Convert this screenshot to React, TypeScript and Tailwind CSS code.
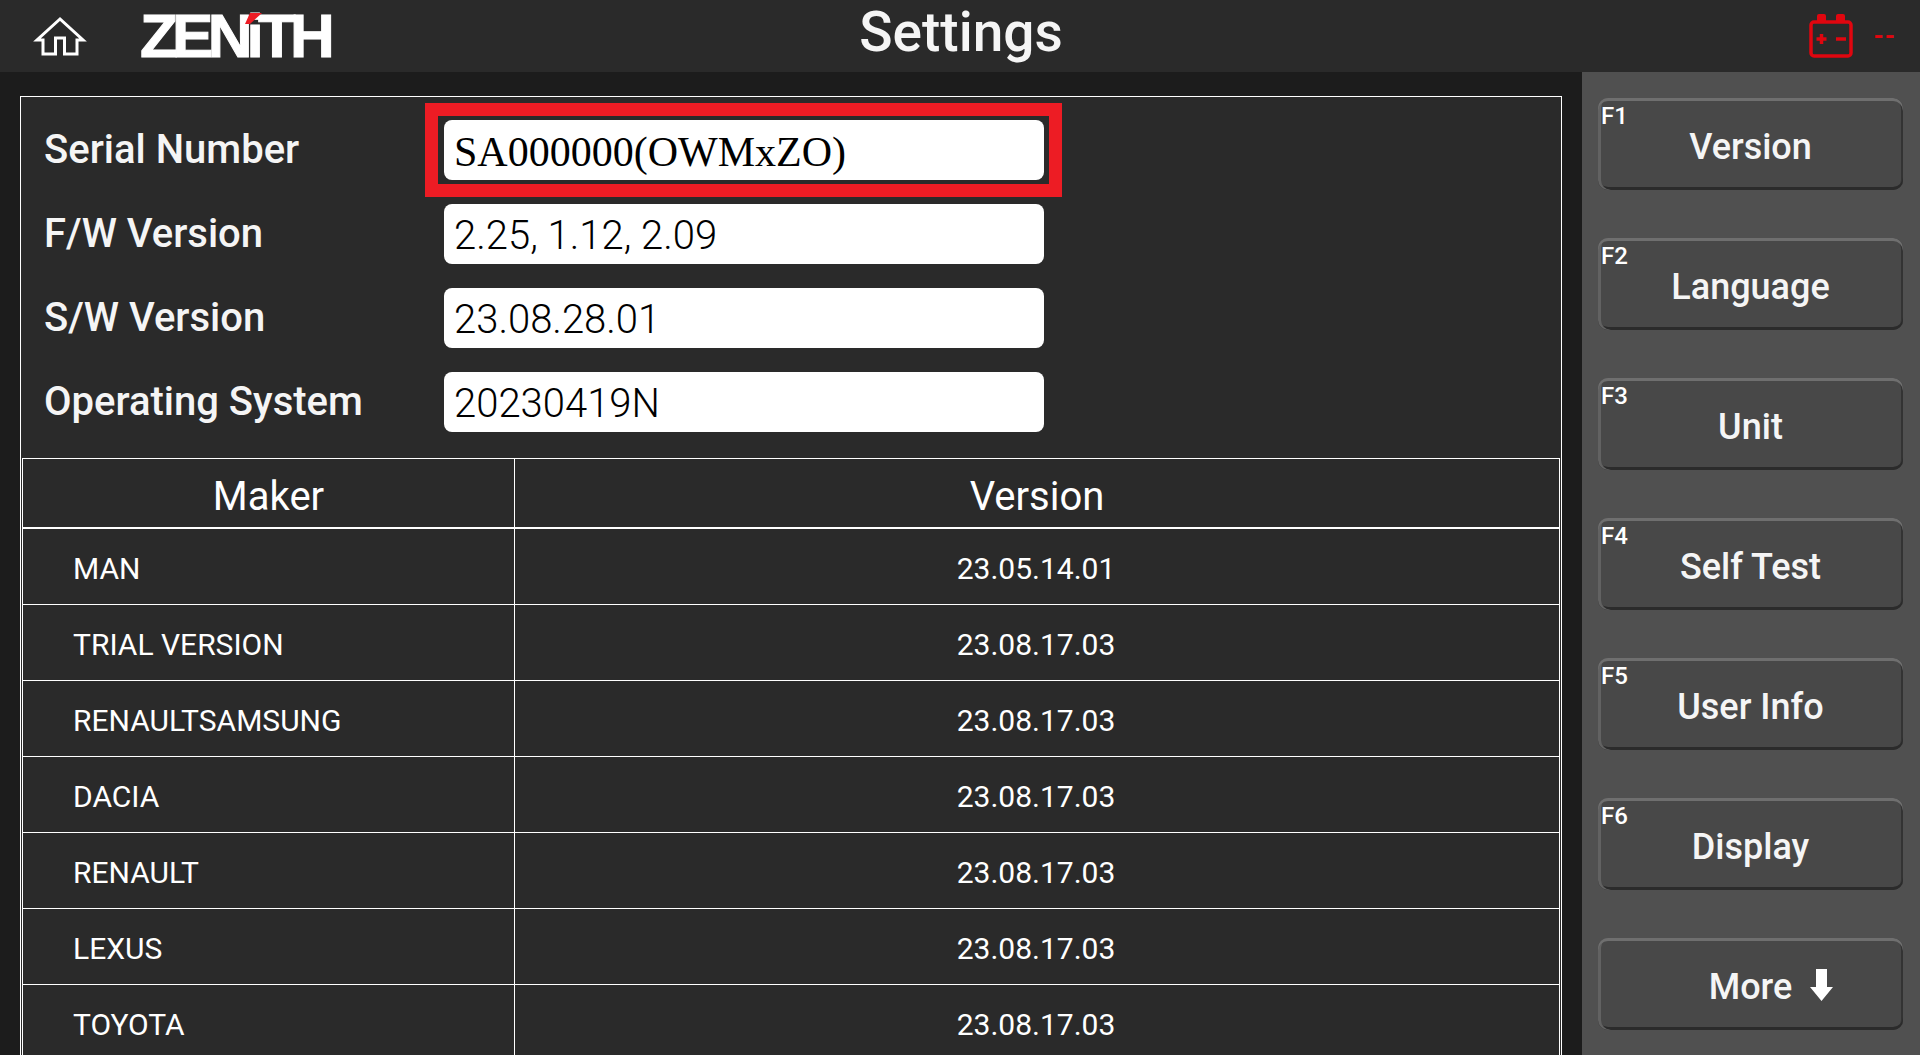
const infoRows = [
  { label: 'Serial Number', value: 'SA000000(OWMxZO)', marked: true },
  { label: 'F/W Version', value: '2.25, 1.12, 2.09' },
  { label: 'S/W Version', value: '23.08.28.01' },
  { label: 'Operating System', value: '20230419N' },
];

const makers = [
  ['MAN', '23.05.14.01'],
  ['TRIAL VERSION', '23.08.17.03'],
  ['RENAULTSAMSUNG', '23.08.17.03'],
  ['DACIA', '23.08.17.03'],
  ['RENAULT', '23.08.17.03'],
  ['LEXUS', '23.08.17.03'],
  ['TOYOTA', '23.08.17.03'],
];

const menu = [
  { key: 'F1', label: 'Version' },
  { key: 'F2', label: 'Language' },
  { key: 'F3', label: 'Unit' },
  { key: 'F4', label: 'Self Test' },
  { key: 'F5', label: 'User Info' },
  { key: 'F6', label: 'Display' },
];

function HomeIcon() {
  return (
    <svg width="56" height="40" viewBox="0 0 56 40" fill="none" stroke="#fff" strokeWidth="3">
      <path d="M28 3 L5 24 H11 V38 H23.5 V22 H32.5 V38 H45 V24 H51 Z" />
    </svg>
  );
}

function Logo() {
  return (
    <div className="relative ml-[52px] flex h-[46px] w-[192px] items-center">
      <span className="font-['Liberation_Sans',sans-serif] text-[62px] leading-none font-bold tracking-[-5.8px] whitespace-nowrap text-white [-webkit-text-stroke:1px_#fff]">
        ZENiTH
      </span>
      <svg className="absolute top-0 left-[104px]" width="18" height="12" viewBox="0 0 18 12">
        <path d="M6 0 H18 L6 11 H1 Z" fill="#ed1c24" />
      </svg>
    </div>
  );
}

function BatteryIcon() {
  return (
    <svg width="44" height="44" viewBox="0 0 44 44" fill="none">
      <rect x="2" y="8" width="40" height="34" rx="3" stroke="#e0060f" strokeWidth="3.5" />
      <rect x="8" y="0" width="9" height="9" rx="2" fill="#e0060f" />
      <rect x="27" y="0" width="9" height="9" rx="2" fill="#e0060f" />
      <path d="M7.5 25 H17.5 M12.5 20 V30 M27 25 H37" stroke="#e0060f" strokeWidth="3.5" />
    </svg>
  );
}

function ArrowDown() {
  return (
    <svg className="absolute top-[9px] left-[calc(100%+17px)]" width="24" height="32" viewBox="0 0 24 32" fill="#fff">
      <path d="M7 0 H18 V18 H24 L12.5 32 L1 18 H7 Z" />
    </svg>
  );
}

function MenuButton({ fkey, children }: { fkey?: string; children: React.ReactNode }) {
  return (
    <div className="relative flex h-[92px] items-center justify-center rounded-[10px] bg-[#484848] pt-[5px] text-[36px] font-medium text-[#f5f5f5] shadow-[inset_0_3px_0_#6f6f6f,inset_3px_0_0_#626262,inset_0_-3px_0_#2b2b2b,inset_-2px_0_0_#333]">
      {fkey && (
        <span className="absolute top-[5px] left-[3px] text-[24px] leading-[26px] font-medium text-white">{fkey}</span>
      )}
      {children}
    </div>
  );
}

export default function App() {
  return (
    <div className="flex h-[1055px] w-[1920px] flex-col overflow-hidden bg-[#1c1c1c] font-['Roboto',sans-serif]">
      <header className="relative flex h-[72px] shrink-0 items-center bg-[#2a2a2a] pr-[24px] pl-[32px]">
        <HomeIcon />
        <Logo />
        <h1 className="absolute inset-x-0 top-[3px] pl-[2px] text-center text-[55px] leading-[58px] font-medium text-[#f5f5f5]">
          Settings
        </h1>
        <div className="ml-auto flex items-center gap-[21px]">
          <BatteryIcon />
          <span className="text-[26px] leading-none font-bold tracking-[1px] text-[#e0060f]">--</span>
        </div>
      </header>

      <div className="flex min-h-0 flex-1">
        <main className="min-w-0 flex-1 pt-[24px] pr-[20px] pl-[20px]">
          <section className="h-[1000px] border border-white bg-[#2a2a2a] pr-[1px] pl-[1px]">
            <div className="flex flex-col gap-[24px] pt-[23px] pb-[26px] pl-[22px]">
              {infoRows.map((row) => (
                <div key={row.label} className="flex h-[60px] items-center">
                  <span className="w-[400px] text-[40px] leading-[60px] font-medium text-[#f5f5f5]">{row.label}</span>
                  <div className="relative h-[60px] w-[600px]">
                    <div
                      className={
                        row.marked
                          ? "flex h-full items-center rounded-[8px] bg-white pt-[4px] pl-[10px] font-['Liberation_Serif',serif] text-[42px] text-black"
                          : 'flex h-full items-center rounded-[8px] bg-white pt-[4px] pl-[10px] text-[40px] font-light text-black'
                      }
                    >
                      {row.value}
                    </div>
                    {row.marked && (
                      <div className="absolute -top-[17px] -right-[18px] -bottom-[17px] -left-[19px] border-[13px] border-[#ed1c24]" />
                    )}
                  </div>
                </div>
              ))}
            </div>

            <div className="border border-white text-white">
              <div className="flex h-[70px] border-b-2 border-white pt-[8px] text-[40px]">
                <div className="-mt-[8px] flex w-[492px] items-center justify-center border-r border-white pt-[8px]">Maker</div>
                <div className="flex flex-1 items-center justify-center">Version</div>
              </div>
              {makers.map(([maker, version]) => (
                <div key={maker} className="flex h-[76px] border-b border-white text-[30px]">
                  <div className="flex w-[492px] items-center border-r border-white pt-[3px] pl-[50px]">{maker}</div>
                  <div className="flex flex-1 items-center justify-center pt-[3px] pr-[2px]">{version}</div>
                </div>
              ))}
            </div>
          </section>
        </main>

        <aside className="flex w-[338px] shrink-0 flex-col gap-[48px] bg-[#505050] pt-[26px] pr-[17px] pl-[16px]">
          {menu.map((item) => (
            <MenuButton key={item.key} fkey={item.key}>
              {item.label}
            </MenuButton>
          ))}
          <MenuButton>
            <span className="relative">
              More
              <ArrowDown />
            </span>
          </MenuButton>
        </aside>
      </div>
    </div>
  );
}
